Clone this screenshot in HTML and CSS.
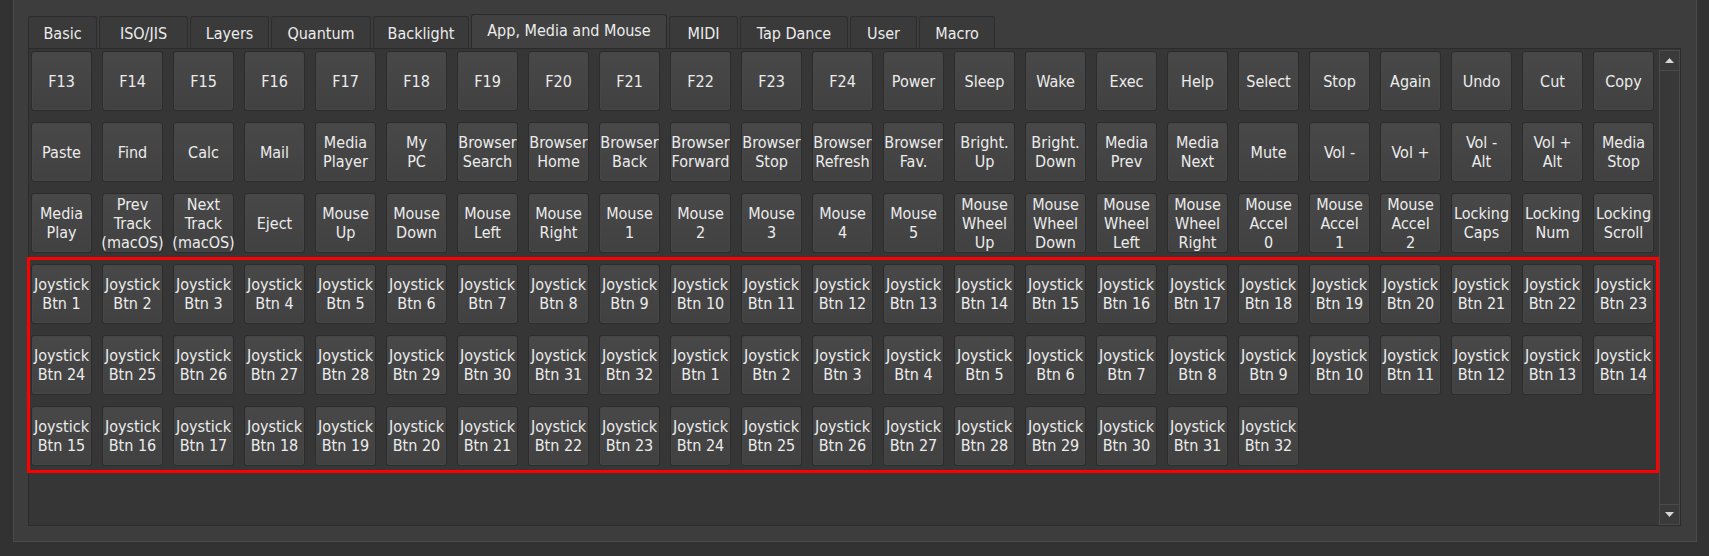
FILE: index.html
```html
<!DOCTYPE html>
<html>
<head>
<meta charset="utf-8">
<link rel="stylesheet" href="styles.css">
</head>
<body>
<div class="window">
  <div class="tabbar">
    <div class="tab w-basic">Basic</div>
    <div class="tab w-iso">ISO/JIS</div>
    <div class="tab w-layers">Layers</div>
    <div class="tab w-quantum">Quantum</div>
    <div class="tab w-backlight">Backlight</div>
    <div class="tab active w-app">App, Media and Mouse</div>
    <div class="tab w-midi">MIDI</div>
    <div class="tab w-tap">Tap Dance</div>
    <div class="tab w-user">User</div>
    <div class="tab w-macro">Macro</div>
  </div>
  <div class="pane">
    <div class="content">
      <div class="grid">
        <div class="key">F13</div><div class="key">F14</div><div class="key">F15</div><div class="key">F16</div><div class="key">F17</div><div class="key">F18</div><div class="key">F19</div><div class="key">F20</div><div class="key">F21</div><div class="key">F22</div><div class="key">F23</div><div class="key">F24</div><div class="key">Power</div><div class="key">Sleep</div><div class="key">Wake</div><div class="key">Exec</div><div class="key">Help</div><div class="key">Select</div><div class="key">Stop</div><div class="key">Again</div><div class="key">Undo</div><div class="key">Cut</div><div class="key">Copy</div>
        <div class="key">Paste</div><div class="key">Find</div><div class="key">Calc</div><div class="key">Mail</div><div class="key">Media<br>Player</div><div class="key">My<br>PC</div><div class="key">Browser<br>Search</div><div class="key">Browser<br>Home</div><div class="key">Browser<br>Back</div><div class="key">Browser<br>Forward</div><div class="key">Browser<br>Stop</div><div class="key">Browser<br>Refresh</div><div class="key">Browser<br>Fav.</div><div class="key">Bright.<br>Up</div><div class="key">Bright.<br>Down</div><div class="key">Media<br>Prev</div><div class="key">Media<br>Next</div><div class="key">Mute</div><div class="key">Vol -</div><div class="key">Vol +</div><div class="key">Vol -<br>Alt</div><div class="key">Vol +<br>Alt</div><div class="key">Media<br>Stop</div>
        <div class="key">Media<br>Play</div><div class="key">Prev<br>Track<br>(macOS)</div><div class="key">Next<br>Track<br>(macOS)</div><div class="key">Eject</div><div class="key">Mouse<br>Up</div><div class="key">Mouse<br>Down</div><div class="key">Mouse<br>Left</div><div class="key">Mouse<br>Right</div><div class="key">Mouse<br>1</div><div class="key">Mouse<br>2</div><div class="key">Mouse<br>3</div><div class="key">Mouse<br>4</div><div class="key">Mouse<br>5</div><div class="key">Mouse<br>Wheel<br>Up</div><div class="key">Mouse<br>Wheel<br>Down</div><div class="key">Mouse<br>Wheel<br>Left</div><div class="key">Mouse<br>Wheel<br>Right</div><div class="key">Mouse<br>Accel<br>0</div><div class="key">Mouse<br>Accel<br>1</div><div class="key">Mouse<br>Accel<br>2</div><div class="key">Locking<br>Caps</div><div class="key">Locking<br>Num</div><div class="key">Locking<br>Scroll</div>
      </div>
      <div class="highlight">
        <div class="grid">
          <div class="key">Joystick<br>Btn 1</div><div class="key">Joystick<br>Btn 2</div><div class="key">Joystick<br>Btn 3</div><div class="key">Joystick<br>Btn 4</div><div class="key">Joystick<br>Btn 5</div><div class="key">Joystick<br>Btn 6</div><div class="key">Joystick<br>Btn 7</div><div class="key">Joystick<br>Btn 8</div><div class="key">Joystick<br>Btn 9</div><div class="key">Joystick<br>Btn 10</div><div class="key">Joystick<br>Btn 11</div><div class="key">Joystick<br>Btn 12</div><div class="key">Joystick<br>Btn 13</div><div class="key">Joystick<br>Btn 14</div><div class="key">Joystick<br>Btn 15</div><div class="key">Joystick<br>Btn 16</div><div class="key">Joystick<br>Btn 17</div><div class="key">Joystick<br>Btn 18</div><div class="key">Joystick<br>Btn 19</div><div class="key">Joystick<br>Btn 20</div><div class="key">Joystick<br>Btn 21</div><div class="key">Joystick<br>Btn 22</div><div class="key">Joystick<br>Btn 23</div>
          <div class="key">Joystick<br>Btn 24</div><div class="key">Joystick<br>Btn 25</div><div class="key">Joystick<br>Btn 26</div><div class="key">Joystick<br>Btn 27</div><div class="key">Joystick<br>Btn 28</div><div class="key">Joystick<br>Btn 29</div><div class="key">Joystick<br>Btn 30</div><div class="key">Joystick<br>Btn 31</div><div class="key">Joystick<br>Btn 32</div><div class="key">Joystick<br>Btn 1</div><div class="key">Joystick<br>Btn 2</div><div class="key">Joystick<br>Btn 3</div><div class="key">Joystick<br>Btn 4</div><div class="key">Joystick<br>Btn 5</div><div class="key">Joystick<br>Btn 6</div><div class="key">Joystick<br>Btn 7</div><div class="key">Joystick<br>Btn 8</div><div class="key">Joystick<br>Btn 9</div><div class="key">Joystick<br>Btn 10</div><div class="key">Joystick<br>Btn 11</div><div class="key">Joystick<br>Btn 12</div><div class="key">Joystick<br>Btn 13</div><div class="key">Joystick<br>Btn 14</div>
          <div class="key">Joystick<br>Btn 15</div><div class="key">Joystick<br>Btn 16</div><div class="key">Joystick<br>Btn 17</div><div class="key">Joystick<br>Btn 18</div><div class="key">Joystick<br>Btn 19</div><div class="key">Joystick<br>Btn 20</div><div class="key">Joystick<br>Btn 21</div><div class="key">Joystick<br>Btn 22</div><div class="key">Joystick<br>Btn 23</div><div class="key">Joystick<br>Btn 24</div><div class="key">Joystick<br>Btn 25</div><div class="key">Joystick<br>Btn 26</div><div class="key">Joystick<br>Btn 27</div><div class="key">Joystick<br>Btn 28</div><div class="key">Joystick<br>Btn 29</div><div class="key">Joystick<br>Btn 30</div><div class="key">Joystick<br>Btn 31</div><div class="key">Joystick<br>Btn 32</div>
        </div>
      </div>
    </div>
    <div class="scrollbar">
      <div class="sb-btn"><svg width="9" height="5" viewBox="0 0 9 5"><polygon points="0,5 9,5 4.5,0" fill="#d6d6d6"/></svg></div>
      <div class="sb-track"></div>
      <div class="sb-btn"><svg width="9" height="5" viewBox="0 0 9 5"><polygon points="0,0 9,0 4.5,5" fill="#d6d6d6"/></svg></div>
    </div>
  </div>
</div>
</body>
</html>
```

FILE: styles.css
```css
html, body {
  margin: 0;
  padding: 0;
}
body {
  background: #323232;
  width: 1709px;
  height: 556px;
  overflow: hidden;
  font-family: "DejaVu Sans Condensed", "DejaVu Sans", sans-serif;
  font-stretch: condensed;
  font-size: 16px;
  color: #ececec;
}
.window {
  margin-left: 13px;
  width: 1684px;
  height: 542px;
  box-sizing: border-box;
  background: #3d3d3d;
  border-left: 1px solid #4a4a4a;
  border-right: 1px solid #4a4a4a;
  border-bottom: 1px solid #4a4a4a;
  padding: 14px 15px 15px 14px;
  display: flex;
  flex-direction: column;
}
.tabbar {
  display: flex;
  align-items: flex-end;
  gap: 2px;
  height: 34px;
  flex: none;
}
.tab {
  height: 32px;
  box-sizing: border-box;
  padding: 1px 0 0;
  display: flex;
  align-items: center;
  justify-content: center;
  background: #3a3a3a;
  border: 1px solid #2d2d2d;
  border-bottom: none;
  border-radius: 3px 3px 0 0;
  white-space: nowrap;
  line-height: 19px;
  flex: none;
}
.tab.active {
  height: 34px;
  padding: 0 0 2px;
  background: #414141;
  border-color: #2b2b2b;
}
.w-basic { width: 69px; }
.w-iso { width: 89px; }
.w-layers { width: 79px; }
.w-quantum { width: 100px; }
.w-backlight { width: 96px; }
.w-app { width: 196px; }
.w-midi { width: 69px; }
.w-tap { width: 108px; }
.w-user { width: 67px; }
.w-macro { width: 76px; }
.pane {
  flex: 1;
  display: flex;
  background: #363636;
  border: 1px solid #2b2b2b;
  min-height: 0;
}
.content {
  flex: 1;
  padding: 2px 0 0 2px;
}
.grid {
  display: grid;
  grid-template-columns: repeat(23, 61px);
  grid-auto-rows: 60px;
  column-gap: 10px;
  row-gap: 11px;
}
.key {
  box-sizing: border-box;
  display: flex;
  align-items: center;
  justify-content: center;
  text-align: center;
  line-height: 19px;
  white-space: nowrap;
  background: linear-gradient(#484848, #414141);
  border: 1px solid #2c2c2c;
  border-radius: 3px;
  box-shadow: inset 0 0 0 1px #464646;
}
.highlight {
  margin: 4px 0 0 -4px;
  border: 3px solid #ff0000;
  padding: 4px 1px;
}
.scrollbar {
  width: 21px;
  margin-top: 1px;
  display: flex;
  flex-direction: column;
  flex: none;
}
.sb-btn {
  height: 21px;
  box-sizing: border-box;
  border: 1px solid #4b4b4b;
  background: #3a3a3a;
  display: flex;
  align-items: center;
  justify-content: center;
  flex: none;
}
.sb-track {
  flex: 1;
  border-left: 1px solid #4b4b4b;
  border-right: 1px solid #4b4b4b;
  background: #383838;
}
```
